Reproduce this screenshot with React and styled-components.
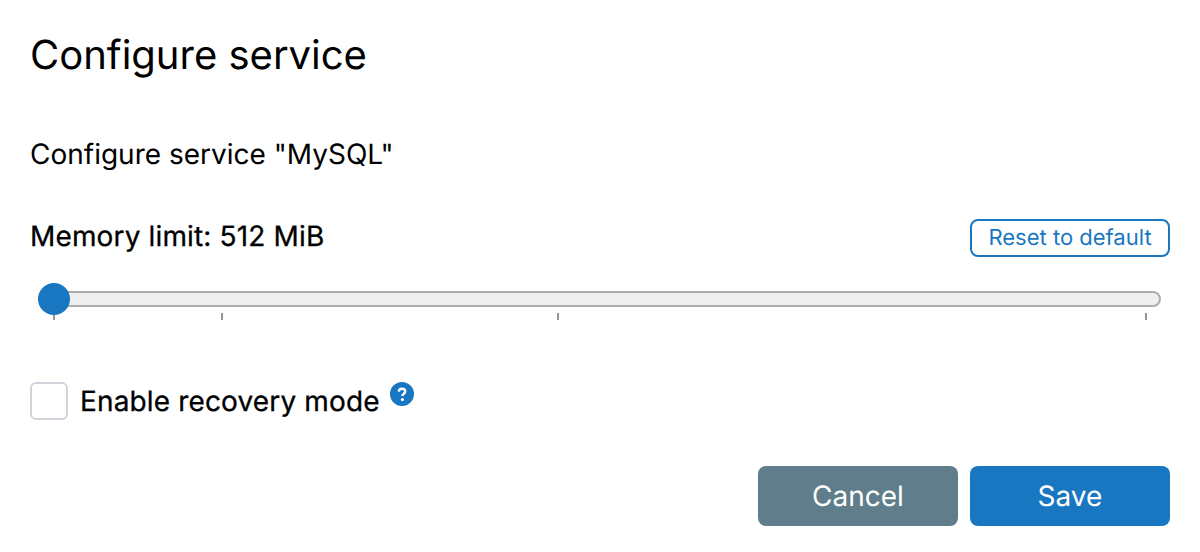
import React from "react";
import styled, { createGlobalStyle } from "styled-components";

const Global = createGlobalStyle`
  html, body { margin: 0; padding: 0; background: #fff; }
  body { font-family: Inter, "Liberation Sans", sans-serif; color: #000; text-rendering: geometricPrecision; }
`;

const Dialog = styled.div`
  width: 1200px;
  height: 552px;
  box-sizing: border-box;
  padding: 30px 30px 26px;
  display: flex;
  flex-direction: column;
`;

const Title = styled.h1`
  margin: 0;
  font-size: 40px;
  line-height: 50px;
  font-weight: 400;
`;

const Intro = styled.p`
  margin: 54px 0 0;
  font-size: 28px;
  line-height: 40px;
  font-weight: 400;
`;

const LimitRow = styled.div`
  margin-top: 45px;
  height: 38px;
  display: flex;
  align-items: flex-start;
  justify-content: space-between;
`;

const LimitLabel = styled.div`
  font-size: 28px;
  line-height: 34px;
  font-weight: 400;
  letter-spacing: 0.15px;
  -webkit-text-stroke: 0.3px #000;
`;

const ResetButton = styled.button`
  box-sizing: border-box;
  width: 200px;
  height: 38px;
  padding: 0;
  border: 2px solid #1976c0;
  border-radius: 8px;
  background: #fff;
  color: #1976c0;
  font: 400 22px Inter, sans-serif;
  text-rendering: geometricPrecision;
`;

const Slider = styled.div`
  position: relative;
  margin: 34px 9px 0 8px;
  height: 30px;
`;

const Track = styled.div`
  box-sizing: border-box;
  height: 16px;
  border: 2px solid #adadad;
  border-radius: 8px;
  background: #eeeeee;
`;

const Thumb = styled.div`
  position: absolute;
  left: 0;
  top: -8px;
  width: 32px;
  height: 32px;
  border-radius: 50%;
  background: #1976c0;
`;

const Tick = styled.div`
  position: absolute;
  top: 22px;
  width: 2px;
  height: 7px;
  margin-left: -1px;
  background: #999590;
`;

const RecoveryRow = styled.div`
  margin-top: 61px;
  display: flex;
  align-items: flex-start;
`;

const Check = styled.div`
  box-sizing: border-box;
  width: 38px;
  height: 38px;
  border: 2px solid #d1d5db;
  border-radius: 6px;
  background: #fff;
`;

const CheckLabel = styled.span`
  margin-left: 12px;
  font-size: 28px;
  line-height: 38px;
  font-weight: 400;
  letter-spacing: 0.15px;
  -webkit-text-stroke: 0.3px #000;
`;

const Help = styled.svg`
  margin-left: 10px;
  width: 24px;
  height: 24px;
`;

const Actions = styled.div`
  margin-top: 46px;
  display: flex;
  justify-content: flex-end;
  gap: 12px;
`;

const ActionButton = styled.button`
  width: 200px;
  height: 60px;
  padding: 0;
  border: 0;
  border-radius: 8px;
  background: ${(p) => (p.$primary ? "#1976c0" : "#607d8b")};
  color: #fff;
  font: 400 28px Inter, sans-serif;
  text-rendering: geometricPrecision;
`;

const ticks = [0, 2 / 13, 6 / 13, 1];

export default function App() {
  return (
    <>
      <Global />
      <Dialog>
        <Title>Configure service</Title>
        <Intro>Configure service "MySQL"</Intro>
        <LimitRow>
          <LimitLabel>Memory limit: 512 MiB</LimitLabel>
          <ResetButton>Reset to default</ResetButton>
        </LimitRow>
        <Slider>
          <Track />
          {ticks.map((t) => (
            <Tick key={t} style={{ left: `calc(16px + (100% - 31px) * ${t})` }} />
          ))}
          <Thumb />
        </Slider>
        <RecoveryRow>
          <Check />
          <CheckLabel>Enable recovery mode</CheckLabel>
          <Help viewBox="0 0 24 24">
            <circle cx="12" cy="12" r="12" fill="#1976c0" />
            <path d="M8.8 9.6c.1-1.8 1.4-2.8 3.2-2.8 1.9 0 3.2 1 3.2 2.6 0 1.2-.6 1.9-1.6 2.5-.9.6-1.2 1-1.2 1.9v.2" fill="none" stroke="#fff" strokeWidth="2.4" />
            <circle cx="12.4" cy="17.6" r="1.6" fill="#fff" />
          </Help>
        </RecoveryRow>
        <Actions>
          <ActionButton>Cancel</ActionButton>
          <ActionButton $primary>Save</ActionButton>
        </Actions>
      </Dialog>
    </>
  );
}
